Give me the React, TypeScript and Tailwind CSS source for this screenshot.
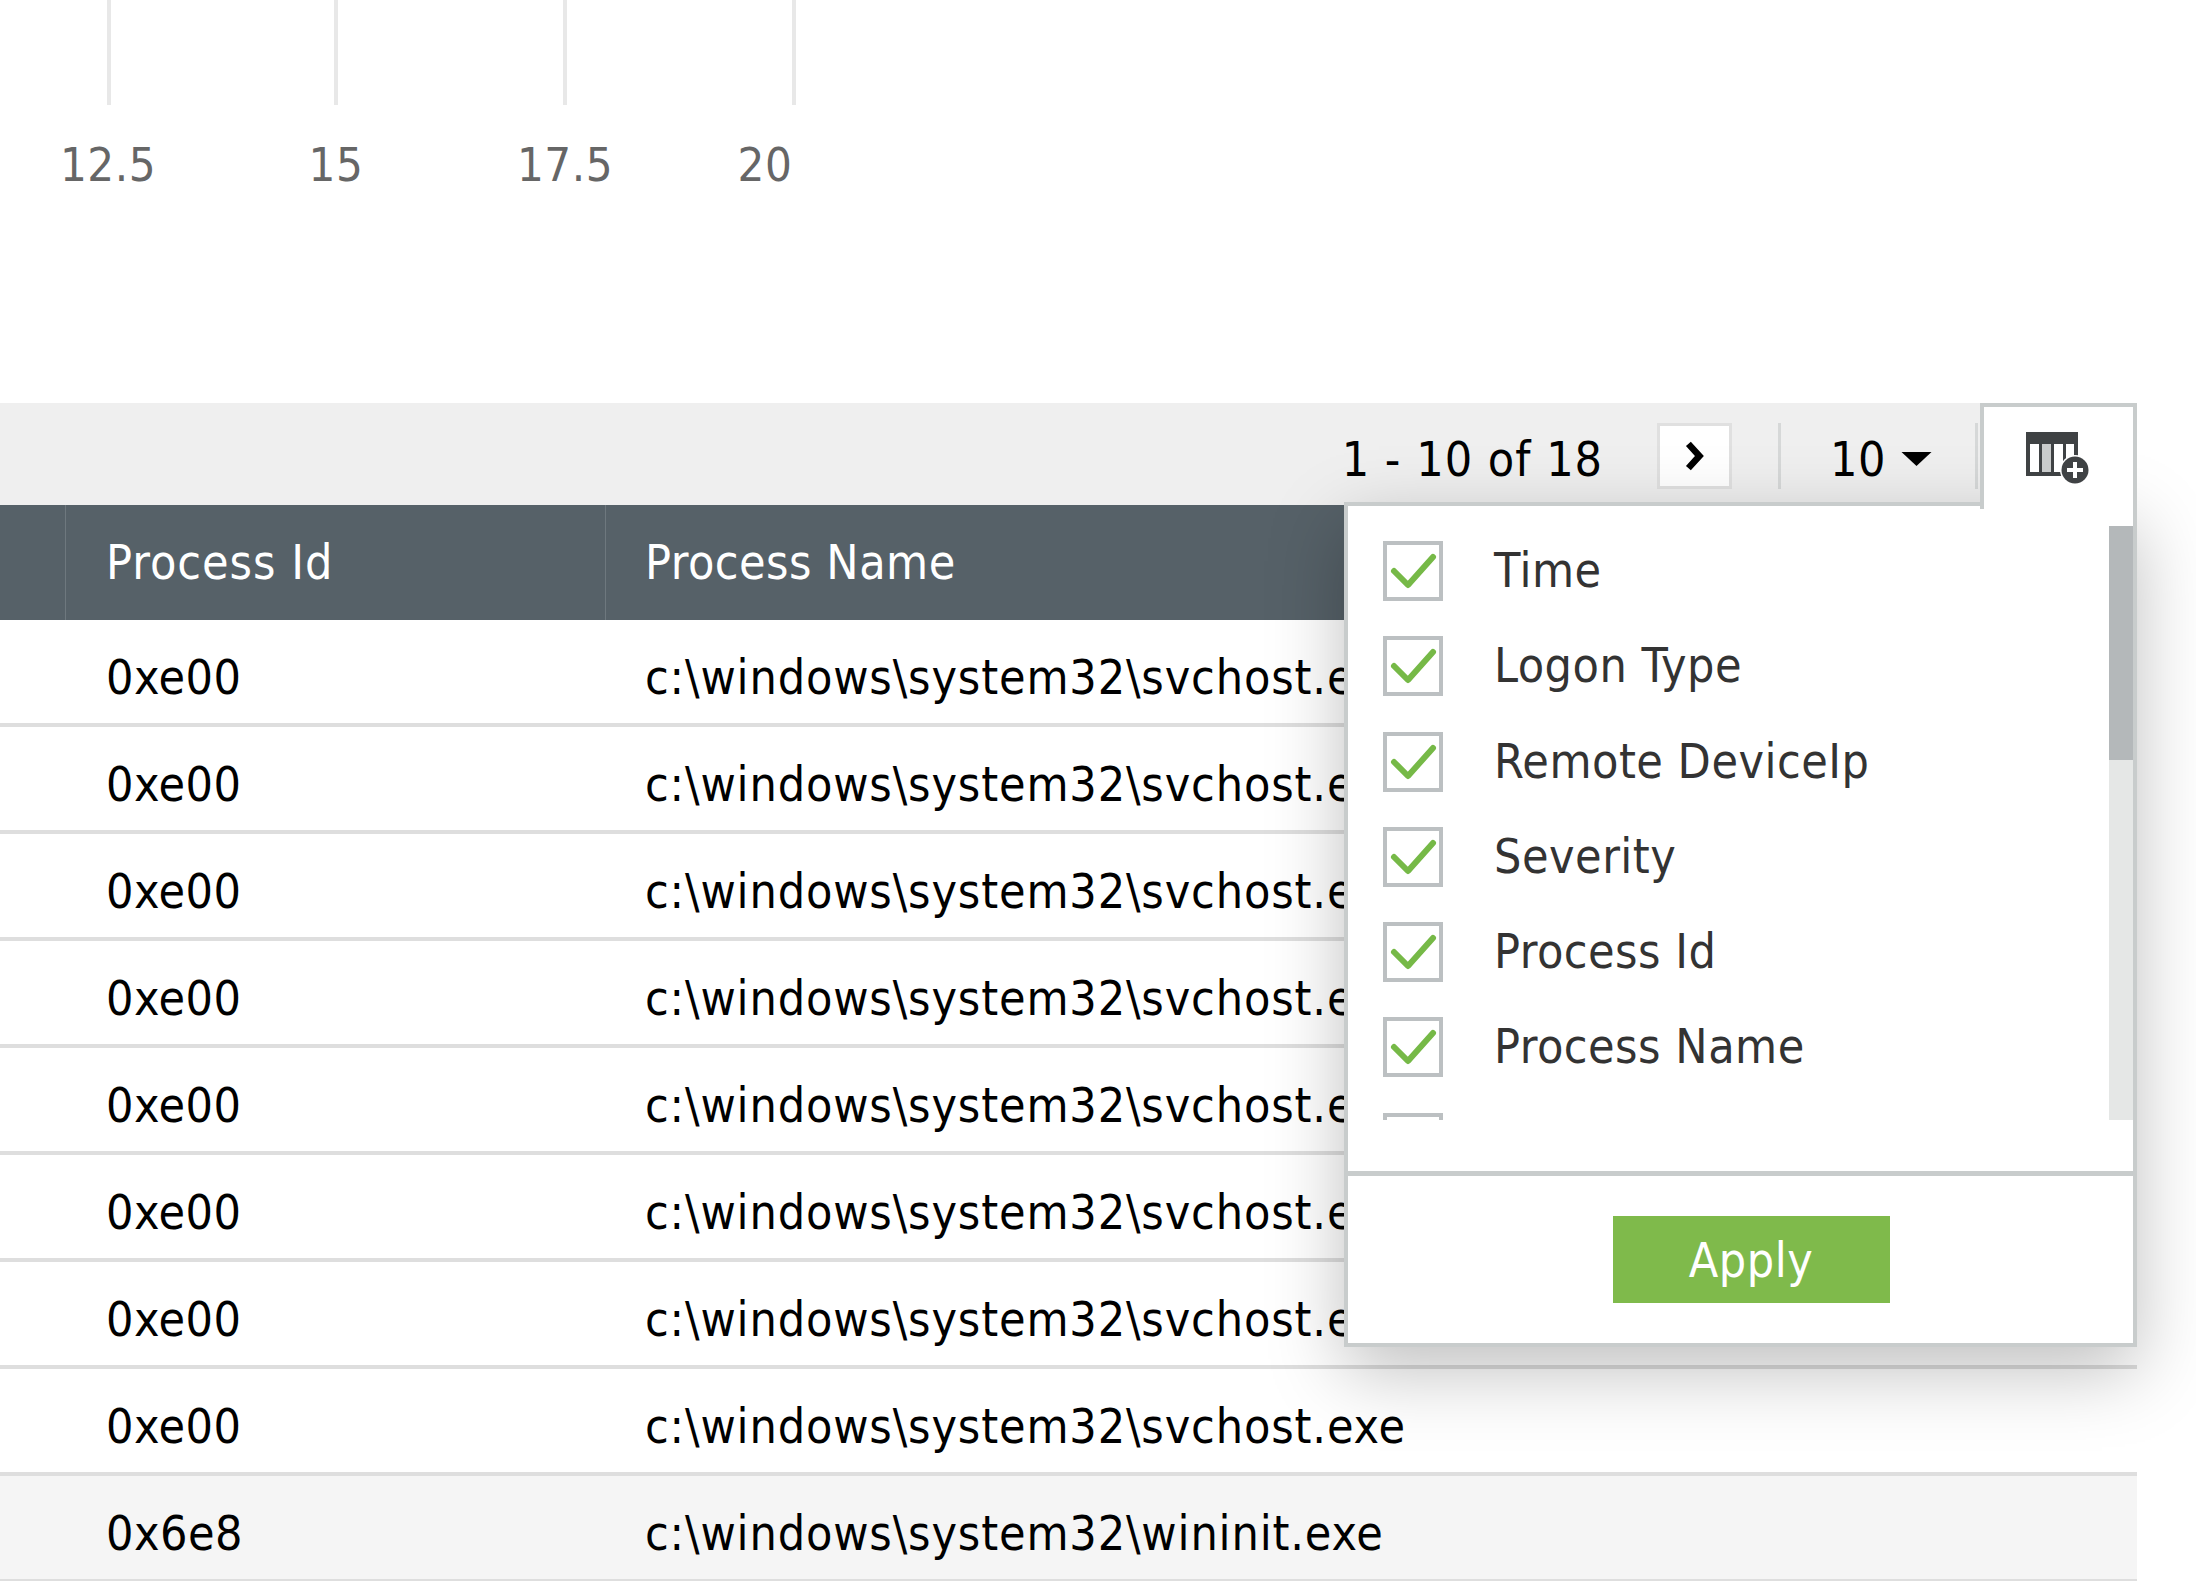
const ROWS = [
  ["0xe00", "c:\\windows\\system32\\svchost.exe"],
  ["0xe00", "c:\\windows\\system32\\svchost.exe"],
  ["0xe00", "c:\\windows\\system32\\svchost.exe"],
  ["0xe00", "c:\\windows\\system32\\svchost.exe"],
  ["0xe00", "c:\\windows\\system32\\svchost.exe"],
  ["0xe00", "c:\\windows\\system32\\svchost.exe"],
  ["0xe00", "c:\\windows\\system32\\svchost.exe"],
  ["0xe00", "c:\\windows\\system32\\svchost.exe"],
  ["0x6e8", "c:\\windows\\system32\\wininit.exe"],
];
const COLUMNS = ["Time", "Logon Type", "Remote DeviceIp", "Severity", "Process Id", "Process Name"];

function Check() {
  return (
    <svg viewBox="0 0 60 60" className="h-[60px] w-[60px] shrink-0">
      <rect x="2" y="2" width="56" height="56" fill="#fff" stroke="#bcc0c2" strokeWidth="4" />
      <path d="M11 30 L25 44 L50 16" fill="none" stroke="#76b947" strokeWidth="6" strokeLinecap="round" strokeLinejoin="round" />
    </svg>
  );
}

function ColumnsIcon() {
  return (
    <svg viewBox="0 0 66 54" className="h-[54px] w-[66px]">
      <rect x="0" y="0" width="52" height="44" fill="#3f4244" />
      <rect x="4" y="12" width="9" height="28" fill="#fff" />
      <rect x="16" y="12" width="9" height="28" fill="#c9cbcb" />
      <rect x="28" y="12" width="9" height="28" fill="#fff" />
      <rect x="40" y="12" width="8" height="28" fill="#fff" />
      <circle cx="49" cy="38" r="15" fill="#fff" />
      <circle cx="49" cy="38" r="13.5" fill="#3f4244" />
      <path d="M41 38 H57 M49 30 V46" stroke="#fff" strokeWidth="4" />
    </svg>
  );
}

export default function App() {
  return (
    <div className="h-[1581px] w-[2196px] overflow-hidden bg-white font-['DejaVu_Sans',sans-serif] font-stretch-condensed tracking-[0.5px]">
      <div className="h-[403px]">
        <div className="flex h-[105px] pl-[107px]">
          <div className="w-[4px] bg-[#e8e8e8]" />
          <div className="ml-[223px] w-[4px] bg-[#e8e8e8]" />
          <div className="ml-[225px] w-[4px] bg-[#e8e8e8]" />
          <div className="ml-[225px] w-[4px] bg-[#e8e8e8]" />
        </div>
        <div className="mt-[35px] flex text-[47px] leading-[50px] text-[#666]">
          <span className="ml-[48px] w-[120px] text-center">12.5</span>
          <span className="ml-[108px] w-[120px] text-center">15</span>
          <span className="ml-[109px] w-[120px] text-center">17.5</span>
          <span className="ml-[80px] w-[120px] text-center">20</span>
        </div>
      </div>

      <div className="relative w-[2137px]">
        <div className="flex h-[102px] items-stretch justify-end bg-[#efefef] text-[48px] text-black">
          <div className="flex items-center pt-[4px]">
            <span className="mr-[54px] pt-[6px] leading-none tracking-[1px]">1 - 10 of 18</span>
            <div className="flex h-[66px] w-[75px] items-center justify-center border-[3px] border-[#e0e0e0] bg-white">
              <svg viewBox="0 0 20 28" className="h-[32px] w-[22px]">
                <path d="M4 3 L14 14 L4 25" fill="none" stroke="#000" strokeWidth="6" />
              </svg>
            </div>
            <div className="ml-[46px] h-[66px] w-[3px] bg-[#d6d8d8]" />
            <span className="ml-[49px] pt-[6px] leading-none">10</span>
            <svg viewBox="0 0 30 14" className="ml-[15px] mt-[6px] h-[14px] w-[31px]">
              <path d="M0 0 H30 L15 14 Z" fill="#000" />
            </svg>
            <div className="ml-[43px] h-[66px] w-[3px] bg-[#d6d8d8]" />
          </div>
          <div className="z-20 ml-[2px] -mb-[4px] flex w-[157px] items-center justify-center border-x-4 border-t-4 border-[#c8cccc] bg-white pt-[2px]">
            <ColumnsIcon />
          </div>
        </div>

        <div className="flex h-[115px] items-center bg-[#566168] text-[48px] text-white">
          <div className="h-full w-[66px] border-r border-[#6e787e]" />
          <div className="flex h-full w-[540px] items-center border-r border-[#6e787e] pb-[2px] pl-[40px] tracking-[1px]">Process Id</div>
          <div className="pb-[2px] pl-[39px]">Process Name</div>
        </div>

        {ROWS.map((row, i) => (
          <div
            key={i}
            className={`flex h-[107px] items-center border-b-[4px] border-[#dedede] pt-[10px] text-[48px] text-black ${i === 8 ? "bg-[#f5f5f5]" : "bg-white"}`}
          >
            <div className="w-[606px] pl-[106px]">{row[0]}</div>
            <div className="pl-[39px] tracking-[0.85px]">{row[1]}</div>
          </div>
        ))}

        <div className="absolute right-0 top-[99px] z-10 flex h-[845px] w-[793px] flex-col border-4 border-[#c8cccc] bg-white shadow-[0_24px_70px_rgba(0,0,0,0.25)]">
          <div className="relative h-[614px] overflow-hidden">
            <div className="flex flex-col gap-[35.3px] pl-[35px] pt-[35px]">
              {COLUMNS.map((c) => (
                <div key={c} className="flex h-[60px] items-center gap-[51px] text-[48px] text-[#333]">
                  <Check />
                  <span className="pb-[2px]">{c}</span>
                </div>
              ))}
              <div className="h-[60px] w-[60px] border-4 border-[#bcc0c2]" />
            </div>
            <div className="absolute bottom-0 right-0 top-[20px] w-[24px] bg-[#e5e7e6]">
              <div className="h-[234px] bg-[#b4b8ba]" />
            </div>
          </div>
          <div className="mt-[51px] h-[5px] bg-[#c8cccc]" />
          <div className="flex flex-1 items-center justify-center">
            <button className="ml-[21px] h-[87px] w-[277px] bg-[#7fba4b] text-[48px] text-white">Apply</button>
          </div>
        </div>
      </div>
    </div>
  );
}
